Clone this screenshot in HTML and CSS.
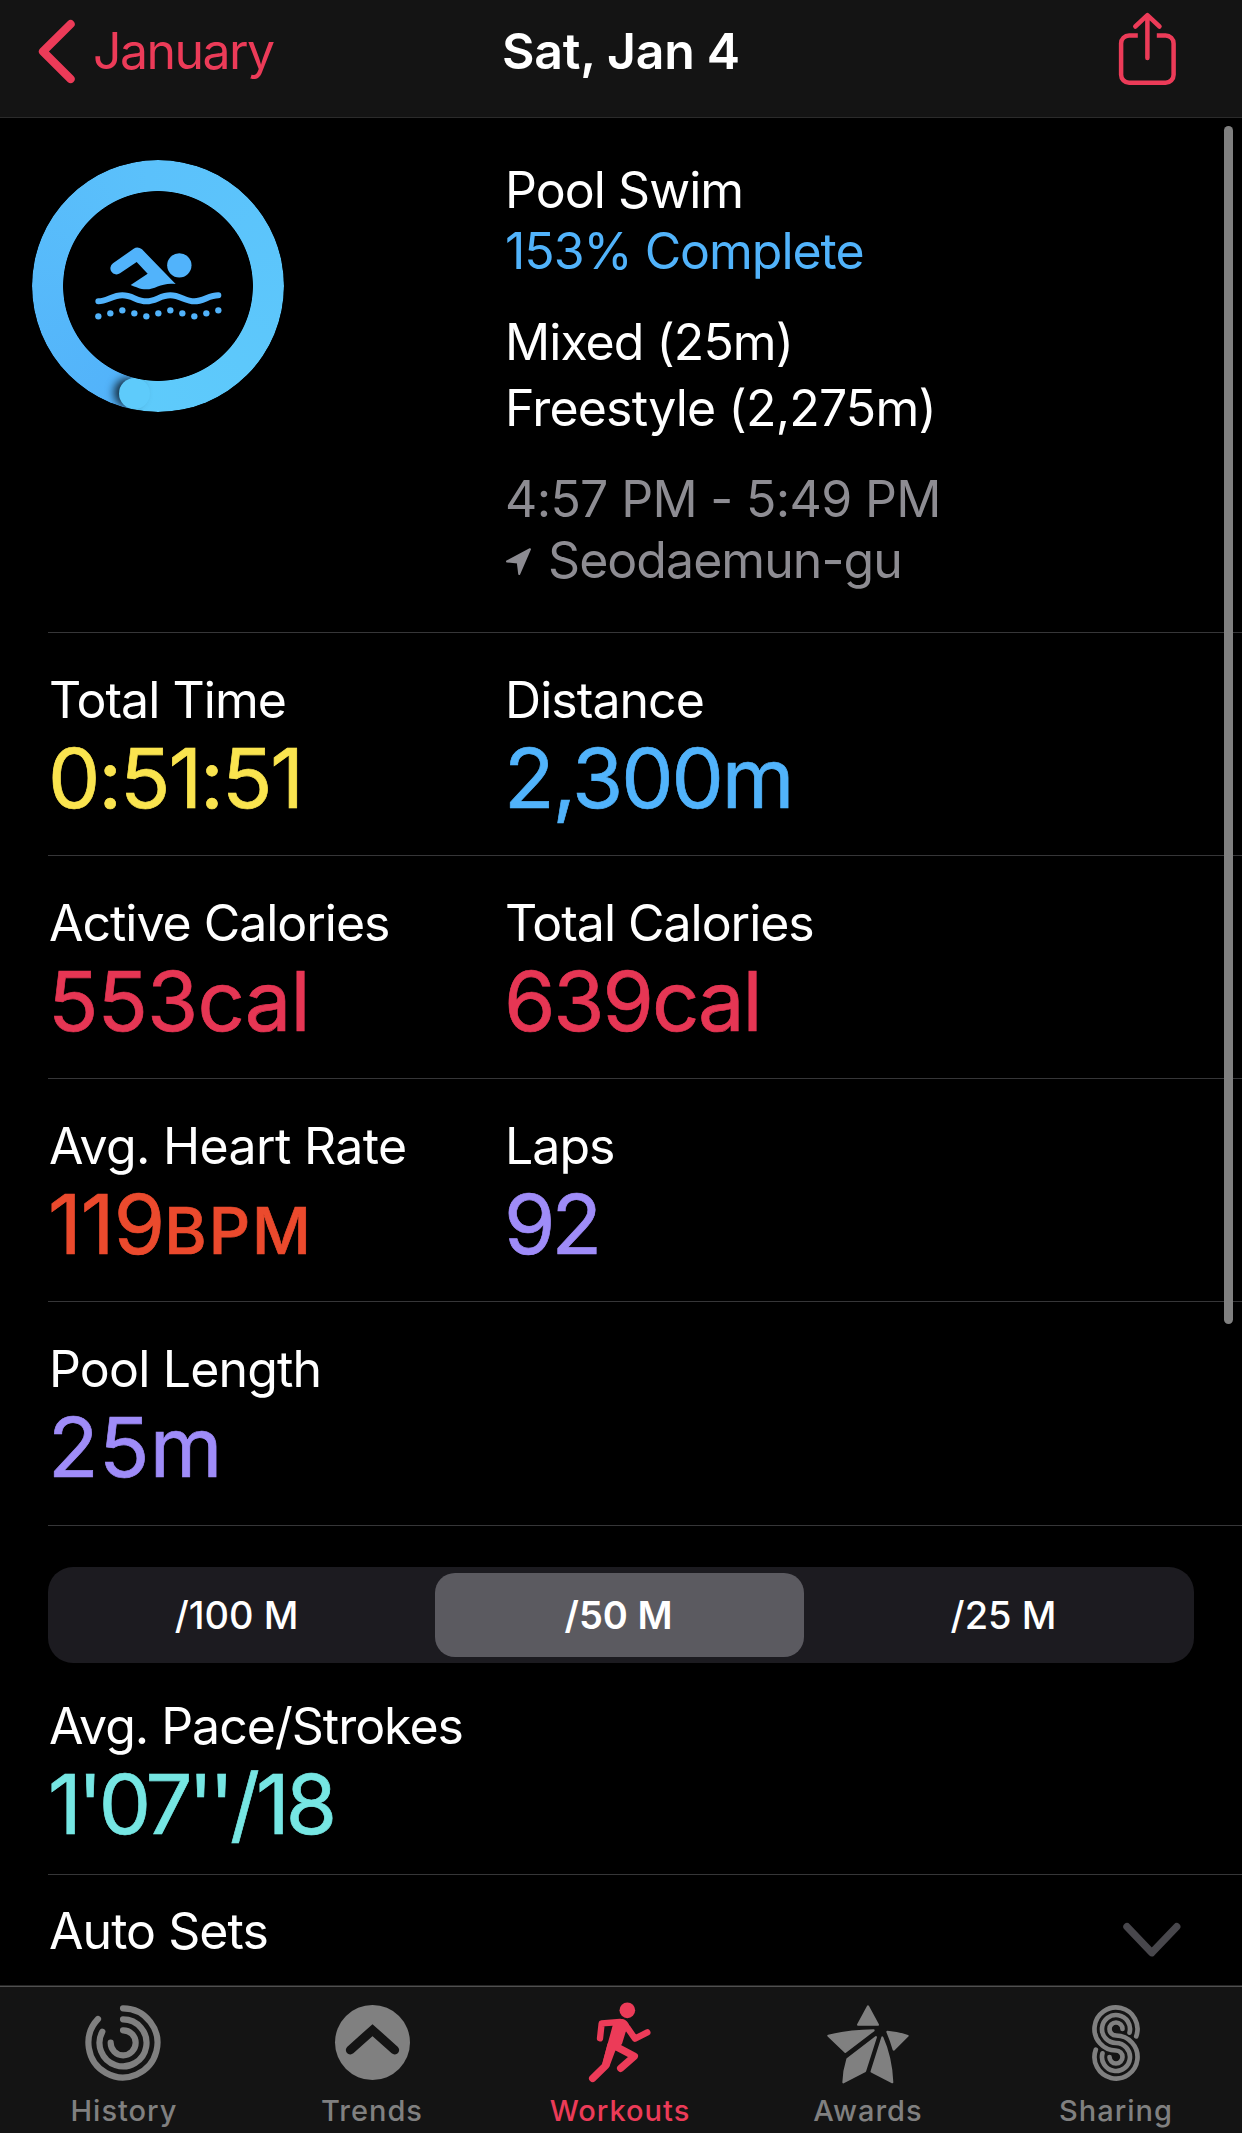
FILE: index.html
```html
<!DOCTYPE html>
<html lang="en">
<head>
<meta charset="utf-8">
<title>Pool Swim – Sat, Jan 4</title>
<link rel="stylesheet" href="styles.css">
</head>
<body>
<div class="screen">
  <header class="navbar">
    <a class="back">
      <svg class="back-icon" width="40" height="68" viewBox="0 0 40 68" fill="none" stroke="currentColor" stroke-width="8.2" stroke-linecap="round" stroke-linejoin="round"><path d="M34.6 6.200 7 33.500 34.600 61"/></svg>
      <span class="back-label">January</span>
    </a>
    <h1 class="title">Sat, Jan 4</h1>
    <svg class="share" width="60" height="76" viewBox="0 0 60 76" fill="none" stroke="currentColor" stroke-width="4.500" stroke-linecap="round" stroke-linejoin="round"><path stroke-linecap="butt" d="M20.800 25.400H12.100a8 8 0 0 0-8 8V64.700a8 8 0 0 0 8 8H48.600a8 8 0 0 0 8-8V33.400a8 8 0 0 0-8-8H39.800"/><path d="M30.400 5.500V48M18.300 16.500 30.400 5.200 42.500 16.500"/></svg>
  </header>

  <main class="content">
    <section class="summary">
      <div class="ring">
        <div class="ring-track"><span class="ring-cap"></span></div>
        <svg class="swimmer" width="252" height="252" viewBox="35 32 756 756" fill="currentColor">
          <path d="M278 342 340 298Q352 290 365 300L466 404C425 398 405 420 378 420 358 420 345 412 331 407L382 373 349 338 299 372A18 18 0 0 1 278 342Z"/>
          <circle cx="477" cy="348" r="36.500"/>
          <path fill="none" stroke="currentColor" stroke-width="18" stroke-linecap="round" d="M234 456C260 456 276 438 306 438S350 456 378 456 420 438 450 438 495 456 522 456 566 438 594 438"/>
          <g><circle cx="234" cy="501" r="9.500"/><circle cx="270" cy="492" r="9.500"/><circle cx="306" cy="483" r="9.500"/><circle cx="342" cy="492" r="9.500"/><circle cx="378" cy="501" r="9.500"/><circle cx="414" cy="492" r="9.500"/><circle cx="450" cy="483" r="9.500"/><circle cx="486" cy="492" r="9.500"/><circle cx="522" cy="501" r="9.500"/><circle cx="558" cy="492" r="9.500"/><circle cx="594" cy="483" r="9.500"/></g>
        </svg>
      </div>
      <div class="details">
        <div class="group">
          <p class="text">Pool Swim</p>
          <p class="text tight blue next">153% Complete</p>
        </div>
        <div class="group strokes">
          <p class="text">Mixed (25m)</p>
          <p class="text snug">Freestyle (2,275m)</p>
        </div>
        <div class="group muted">
          <p class="text wide">4:57 PM - 5:49 PM</p>
          <p class="text place">
            <svg width="26" height="28" viewBox="0 0 26 28" fill="currentColor" stroke="currentColor" stroke-width="2" stroke-linejoin="round"><path d="M1 13.500 24 1.200 13.200 26 11.800 14.500Z"/></svg>
            <span>Seodaemun-gu</span>
          </p>
        </div>
      </div>
    </section>

    <section class="row">
      <div class="metric"><p class="text">Total Time</p><p class="value yellow">0:51:51</p></div>
      <div class="metric"><p class="text">Distance</p><p class="value blue">2,300m</p></div>
    </section>
    <section class="row">
      <div class="metric"><p class="text tight">Active Calories</p><p class="value wide red">553cal</p></div>
      <div class="metric"><p class="text tight">Total Calories</p><p class="value red">639cal</p></div>
    </section>
    <section class="row">
      <div class="metric"><p class="text wide">Avg. Heart Rate</p><p class="value wide orange">119<span class="unit">BPM</span></p></div>
      <div class="metric"><p class="text">Laps</p><p class="value narrow purple">92</p></div>
    </section>
    <section class="row last">
      <div class="metric"><p class="text snug">Pool Length</p><p class="value open purple">25m</p></div>
    </section>

    <section class="pace">
      <div class="segments">
        <span class="segment">/100 M</span>
        <span class="segment selected">/50 M</span>
        <span class="segment">/25 M</span>
      </div>
      <div class="metric"><p class="text tight">Avg. Pace/Strokes</p><p class="value narrow teal">1'07''/18</p></div>
    </section>

    <section class="sets">
      <p class="text">Auto Sets</p>
      <svg class="disclosure" width="60" height="36" viewBox="0 0 60 36" fill="none" stroke="currentColor" stroke-width="7.400" stroke-linecap="round" stroke-linejoin="round"><path d="M5 4.700 29.800 30.700 54.700 4.700"/></svg>
    </section>
    <div class="scrollbar"></div>
  </main>

  <nav class="tabs">
    <a class="tab">
      <svg width="100" height="86" viewBox="102 90 300 258" fill="none" stroke="currentColor" stroke-width="18.500" stroke-linecap="round"><path d="M249 115A103.500 103.500 0 1 1 174 147"/><path d="M249 148A70.500 70.500 0 1 1 187 185"/><path d="M249 181A37.500 37.500 0 1 1 212 218"/></svg>
      <span>History</span>
    </a>
    <a class="tab">
      <svg width="100" height="86" viewBox="846 90 300 258"><circle cx="997.500" cy="217.500" r="112.500" fill="currentColor"/><path d="M931 240 997.500 180.500 1064 240" fill="none" stroke="#141414" stroke-width="27" stroke-linecap="round"/></svg>
      <span>Trends</span>
    </a>
    <a class="tab active">
      <svg width="100" height="86" viewBox="150 90 300 258" fill="none" stroke="currentColor" stroke-linecap="round" stroke-linejoin="round"><circle cx="322" cy="121" r="23.500" fill="currentColor" stroke="none"/><path stroke-width="19" d="M240 205 245 160 300 156"/><path stroke-width="19" d="M308 158Q315 162 322 173L345 206 382 187"/><path stroke-width="22" d="M292 232 343 259 302 295"/><path stroke-width="22" d="M273 225 257 287 218 325"/><path fill="currentColor" stroke="none" d="M279 163Q290 146 306 147 325 150 328 170L317 186 306 222 286 242 268 290 246 283Z"/></svg>
      <span>Workouts</span>
    </a>
    <a class="tab">
      <svg width="100" height="86" viewBox="894 90 300 258" fill="currentColor" stroke="currentColor" stroke-width="6" stroke-linejoin="round"><path d="M1044 109 1074 164.500H1014Z"/><path d="M925 197Q990 182 1061 181L976 246Z"/><path d="M1102 185.500Q1135 188 1163 197.500L1121 239Q1114 214 1102 185.500Z"/><path d="M1068 201 1035.500 303 970 337Q971 302 982 267Z"/><path d="M1087 202Q1114 262 1117 337L1054.500 304.500Z"/></svg>
      <span>Awards</span>
    </a>
    <a class="tab">
      <svg width="100" height="86" viewBox="138 360 300 258" fill="none" stroke="currentColor" stroke-width="14" stroke-linecap="round"><path d="M348.600 469A64.500 64.500 0 1 0 288 511.500A19.500 19.500 0 1 1 268.500 531"/><path d="M328.600 457.900A42 42 0 1 0 288 489A42 42 0 1 1 247.400 520.100"/><path d="M307.500 447A19.500 19.500 0 1 0 288 466.500A64.500 64.500 0 1 1 227.400 509"/></svg>
      <span>Sharing</span>
    </a>
  </nav>
</div>
</body>
</html>
```
FILE: styles.css
```css
* { box-sizing: border-box; }

body {
  margin: 0;
  background: #000;
  color: #fff;
  font-family: Inter, "Liberation Sans", sans-serif;
}

p, h1 { margin: 0; }
svg { display: block; flex: none; }

.screen {
  display: flex;
  flex-direction: column;
  height: 2133px;
  overflow: hidden;
}

/* Navigation bar */
.navbar {
  display: grid;
  grid-template-columns: 1fr auto 1fr;
  align-items: start;
  flex: none;
  height: 118px;
  background: #141414;
  border-bottom: 1px solid #2b2b2b;
}

.back {
  display: flex;
  align-items: start;
  padding: 18px 0 0 36px;
  color: #ec3b58;
}

.back-label {
  margin: 3px 0 0 17px;
  font-size: 50px;
  line-height: 60px;
  letter-spacing: -1.57px;
}

.title {
  padding-top: 21px;
  font-size: 50px;
  font-weight: 600;
  line-height: 60px;
  letter-spacing: -0.28px;
}

.share {
  justify-self: end;
  margin: 10px 65px 0 0;
  color: #ec3b58;
}

/* Scrolling content */
.content {
  position: relative;
  flex: 1;
}

.text {
  padding-left: 1px;
  font-size: 50px;
  line-height: 60px;
  letter-spacing: -0.95px;
  white-space: nowrap;
}

.text.tight { letter-spacing: -1.03px; }
.text.snug { letter-spacing: -0.82px; }
.text.wide { letter-spacing: -0.66px; }

.value {
  margin-top: 3px;
  font-size: 83px;
  line-height: 90px;
  letter-spacing: -2.1px;
  white-space: nowrap;
  -webkit-text-stroke: 0.7px currentColor;
}

.value.wide { letter-spacing: -0.9px; }
.value.open { letter-spacing: 0.3px; }
.value.narrow { letter-spacing: -4px; }

.unit {
  font-size: 64.5px;
  font-weight: 500;
  letter-spacing: 2px;
  line-height: 1;
}

.blue { color: #51b3fb; }
.yellow { color: #fae44f; }
.red { color: #e63654; }
.orange { color: #eb4a2d; }
.purple { color: #9f8cf8; }
.teal { color: #76e6e3; }
.muted { color: #8d8c92; }

.summary {
  display: grid;
  grid-template-columns: 472px 1fr;
  height: 514px;
  padding: 42px 0 0 32px;
}

.ring {
  display: grid;
  width: 252px;
  height: 252px;
}

.ring-track,
.swimmer { grid-area: 1 / 1; }

.ring-track {
  position: relative;
  border-radius: 50%;
  background: conic-gradient(from 192.6deg, #52b2fa, #5bc1fb 45%, #5ecbfb);
  -webkit-mask: radial-gradient(circle, transparent 94.5px, #000 95.300px);
  mask: radial-gradient(circle, transparent 94.5px, #000 95.300px);
}

.ring-cap {
  position: absolute;
  left: 87px;
  top: 218px;
  width: 31px;
  height: 31px;
  border-radius: 50%;
  background: #5ecbfb;
  box-shadow: -6px -1px 8px -1px rgba(0, 0, 0, 0.75);
}

.swimmer {
  color: #51b3fb;
  z-index: 1;
}

.details {
  display: flex;
  flex-direction: column;
  gap: 31px;
}

.next { margin-top: 1px; }

.strokes {
  display: flex;
  flex-direction: column;
  gap: 6px;
}

.place {
  display: flex;
  align-items: center;
  gap: 16px;
  margin-top: 1px;
  padding-left: 2px;
}

.place svg { margin-top: 4px; }

.row {
  display: grid;
  grid-template-columns: 456px 1fr;
  height: 223px;
  margin-left: 48px;
  padding-top: 37px;
  border-top: 1px solid #363638;
}

.row.last { height: 224px; }

/* Pace split picker */
.pace {
  height: 349px;
  margin-left: 48px;
  padding-top: 41px;
  border-top: 1px solid #363638;
}

.segments {
  display: grid;
  grid-template-columns: repeat(3, 1fr);
  width: 1146px;
  height: 96px;
  margin-bottom: 33px;
  padding: 6px 3px 6px 0;
  border-radius: 25px;
  background: #1c1b20;
}

.segment {
  margin: 0 6px;
  padding-right: 4px;
  border-radius: 20px;
  font-size: 38px;
  font-weight: 500;
  line-height: 84px;
  text-align: center;
}

.segment:last-child { padding: 0 0 0 6px; }

.segment.selected {
  padding-right: 2px;
  background: #5b5a60;
  font-weight: 600;
}

.sets {
  display: flex;
  justify-content: space-between;
  align-items: start;
  margin-left: 48px;
  padding: 26px 60px 0 0;
  border-top: 1px solid #363638;
}

.disclosure {
  margin-top: 21px;
  color: #48474c;
}

.scrollbar {
  position: absolute;
  top: 8px;
  right: 9px;
  width: 9px;
  height: 1198px;
  border-radius: 5px;
  background: #808080;
}

/* Tab bar */
.tabs {
  display: flex;
  flex: none;
  height: 148px;
  padding: 13px 2px 0 0;
  background: #141414;
  border-top: 1px solid #262626;
  box-shadow: inset 0 1px #505050;
}

.tab {
  display: flex;
  flex: 1;
  flex-direction: column;
  align-items: center;
  gap: 7px;
  padding-top: 1px;
  color: #808080;
  font-size: 29px;
  font-weight: 450;
  line-height: 36px;
  letter-spacing: 1px;
}

.tab.active { color: #ec3b58; }
```
